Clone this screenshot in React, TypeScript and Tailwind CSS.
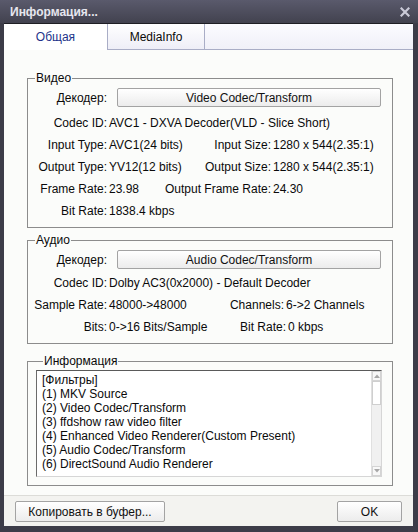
import React from 'react';

const Btn = ({ children, className = '' }: { children: React.ReactNode; className?: string }) => (
  <div
    className={`flex items-center justify-center rounded-[2px] border border-[#a3a3a3] bg-gradient-to-b from-white to-[#ececec] text-[#111] ${className}`}
  >
    {children}
  </div>
);

const Row = ({ l1, v1, l2, v2, w2 }: { l1: string; v1: string; l2?: string; v2?: string; w2: string }) => (
  <div className="flex h-[22px] items-center whitespace-nowrap">
    <span className="w-[79px] text-right">{l1}</span>
    <span className="ml-[2px] flex-1">{v1}</span>
    {l2 && <span className="text-right">{l2}</span>}
    {l2 && <span className={`ml-[2px] ${w2}`}>{v2}</span>}
  </div>
);

const Group = ({ title, children, className = '' }: { title: string; children: React.ReactNode; className?: string }) => (
  <fieldset className={`border border-[#8c8c8c] ${className}`}>
    <legend className="ml-[7px] px-[1px] leading-[14px]">{title}</legend>
    {children}
  </fieldset>
);

const filters = [
  '[Фильтры]',
  '(1) MKV Source',
  '(2) Video Codec/Transform',
  '(3) ffdshow raw video filter',
  '(4) Enhanced Video Renderer(Custom Present)',
  '(5) Audio Codec/Transform',
  '(6) DirectSound Audio Renderer',
];

export default function App() {
  return (
    <div className="flex h-[532px] w-[418px] flex-col bg-[#3c3c48] font-['Liberation_Sans',Arial,sans-serif] text-[12px] text-[#0a0a0a]">
      {/* title bar */}
      <div className="flex h-[23px] items-center justify-between bg-gradient-to-b from-[#5a5a6c] to-[#42424f] pl-[10px] pr-[8px]">
        <span className="font-bold text-[#e6e6ee]">Информация...</span>
        <svg width="10" height="10" viewBox="0 0 10 10">
          <path d="M1.5 1.5 L8.5 8.5 M8.5 1.5 L1.5 8.5" stroke="#c9c9d6" strokeWidth="2.2" strokeLinecap="square" />
        </svg>
      </div>

      {/* client */}
      <div className="mb-[6px] ml-[4px] mr-[5px] flex flex-1 flex-col border-t border-[#1e1e24] bg-[#fbfcfa]">
        {/* tabs */}
        <div className="flex h-[26px]">
          <div className="flex w-[104px] items-center justify-center border-r border-[#a9adc6] bg-white text-[#22338a]">
            Общая
          </div>
          <div className="flex w-[97px] items-center justify-center border-b border-r border-[#a9adc6] bg-gradient-to-b from-white to-[#eeeef7]">
            MediaInfo
          </div>
          <div className="flex-1 border-b border-[#a9adc6] bg-gradient-to-b from-[#fbfbff] to-[#f0f0f8]" />
        </div>

        {/* content */}
        <div className="flex flex-1 flex-col pl-[23px] pr-[20px] pt-[21px]">
          <Group title="Видео" className="pb-[5px]">
            <div className="mt-[3px] flex h-[19px] items-center">
              <span className="w-[79px] text-right">Декодер:</span>
              <Btn className="ml-[10px] h-[19px] w-[264px]">Video Codec/Transform</Btn>
            </div>
            <div className="mt-[5px]">
              <Row l1="Codec ID:" v1="AVC1 - DXVA Decoder(VLD - Slice Short)" w2="" />
              <Row l1="Input Type:" v1="AVC1(24 bits)" l2="Input Size:" v2="1280 x 544(2.35:1)" w2="w-[119px]" />
              <Row l1="Output Type:" v1="YV12(12 bits)" l2="Output Size:" v2="1280 x 544(2.35:1)" w2="w-[119px]" />
              <Row l1="Frame Rate:" v1="23.98" l2="Output Frame Rate:" v2="24.30" w2="w-[119px]" />
              <Row l1="Bit Rate:" v1="1838.4 kbps" w2="" />
            </div>
          </Group>

          <Group title="Аудио" className="mt-[5px] pb-[5px]">
            <div className="mt-[3px] flex h-[19px] items-center">
              <span className="w-[79px] text-right">Декодер:</span>
              <Btn className="ml-[10px] h-[19px] w-[264px]">Audio Codec/Transform</Btn>
            </div>
            <div className="mt-[3px]">
              <Row l1="Codec ID:" v1="Dolby AC3(0x2000) - Default Decoder" w2="" />
              <Row l1="Sample Rate:" v1="48000->48000" l2="Channels:" v2="6->2 Channels" w2="w-[106px]" />
              <Row l1="Bits:" v1="0->16 Bits/Sample" l2="Bit Rate:" v2="0 kbps" w2="w-[104px]" />
            </div>
          </Group>

          <Group title="Информация" className="mt-[10px] pb-[8px] pl-[8px] pr-[10px] pt-[2px]">
            <div className="flex h-[107px] border border-b-[#d6d6d6] border-l-[#6b6b6b] border-r-[#d6d6d6] border-t-[#5a5a5a] bg-white">
              <div className="flex-1 overflow-hidden pl-[5px] pt-[2px] leading-[14px] whitespace-nowrap">
                {filters.map((f) => (
                  <div key={f}>{f}</div>
                ))}
              </div>
              <div className="flex w-[10px] flex-col border-l border-[#e0e0e0] bg-[#f0f0f0]">
                <div className="flex h-[10px] items-center justify-center border border-[#d4d4d4] bg-[#f8f8f8]">
                  <svg width="6" height="4" viewBox="0 0 6 4"><path d="M0 4 L3 0.5 L6 4Z" fill="#a8a8a8" /></svg>
                </div>
                <div className="h-[24px] border border-[#cfcfcf] bg-white" />
                <div className="flex-1" />
                <div className="flex h-[10px] items-center justify-center border border-[#d4d4d4] bg-[#f8f8f8]">
                  <svg width="6" height="4" viewBox="0 0 6 4"><path d="M0 0 L3 3.5 L6 0Z" fill="#a8a8a8" /></svg>
                </div>
              </div>
            </div>
          </Group>
        </div>

        {/* bottom bar */}
        <div className="flex h-[31px] items-start justify-between border-t border-[#dcdcd8] bg-[#f3f3f0] px-[11px] pt-[5px]">
          <Btn className="h-[21px] w-[150px]">Копировать в буфер...</Btn>
          <Btn className="h-[21px] w-[65px] text-[#1a1f55]">OK</Btn>
        </div>
      </div>
    </div>
  );
}
